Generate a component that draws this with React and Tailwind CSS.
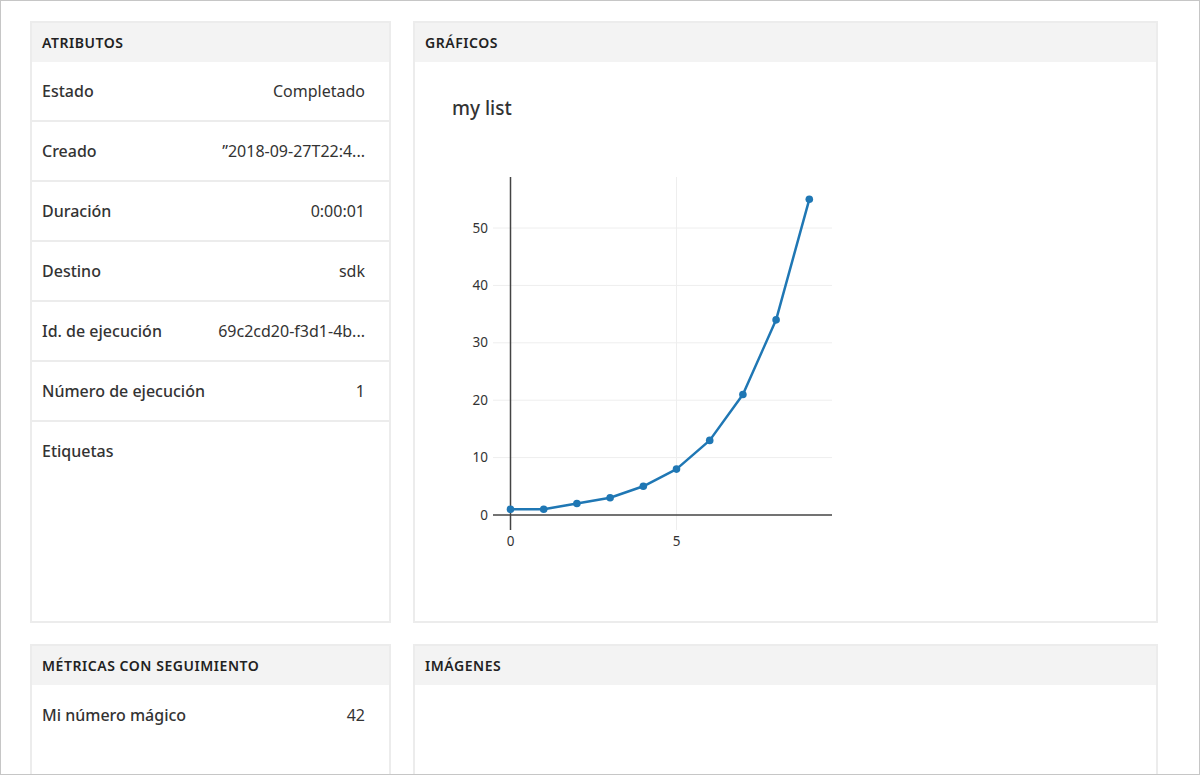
import React from "react";

const FONT = { fontFamily: '"Noto Sans", "Open Sans", "Liberation Sans", sans-serif' };

const attrs = [
  ["Estado", "Completado"],
  ["Creado", "\u201D2018-09-27T22:4..."],
  ["Duración", "0:00:01"],
  ["Destino", "sdk"],
  ["Id. de ejecución", "69c2cd20-f3d1-4b..."],
  ["Número de ejecución", "1"],
];

const data = [1, 1, 2, 3, 5, 8, 13, 21, 34, 55];

function Card({ title, className, children }) {
  return (
    <div className={"bg-white border-2 border-[#ececec] flex flex-col " + className}>
      <div className="h-[39px] bg-[#f3f3f3] flex items-center px-[10px] text-[14px] font-semibold tracking-[0.55px] text-[#222]">
        {title}
      </div>
      {children}
    </div>
  );
}

function Chart() {
  const x0 = 95.5;
  const y0 = 383;
  const sx = 33.2;
  const sy = 5.74;
  const pts = data.map((v, i) => [x0 + i * sx, y0 - v * sy]);
  const grid = [10, 20, 30, 40, 50];
  return (
    <svg width="743" height="430" className="block">
      {grid.map((g) => (
        <line key={g} x1="78" x2="417" y1={y0 - g * sy} y2={y0 - g * sy} stroke="#eeeeee" strokeWidth="1" />
      ))}
      <line x1={x0 + 5 * sx} x2={x0 + 5 * sx} y1="45" y2="398" stroke="#eeeeee" strokeWidth="1" />
      <line x1={x0} x2={x0} y1="45" y2="398" stroke="#444" strokeWidth="1.5" />
      <line x1="78" x2="417" y1={y0} y2={y0} stroke="#444" strokeWidth="1.5" />
      {[0, ...grid].map((g) => (
        <text key={g} x="73" y={y0 - g * sy + 4.5} textAnchor="end" fontSize="13.5" fill="#333" style={FONT}>
          {g}
        </text>
      ))}
      <text x={x0} y="414" textAnchor="middle" fontSize="13.5" fill="#333" style={FONT}>0</text>
      <text x={x0 + 5 * sx} y="414" textAnchor="middle" fontSize="13.5" fill="#333" style={FONT}>5</text>
      <polyline points={pts.map((p) => p.join(",")).join(" ")} fill="none" stroke="#1f77b4" strokeWidth="2.5" strokeLinejoin="round" />
      {pts.map((p, i) => (
        <circle key={i} cx={p[0]} cy={p[1]} r="3.8" fill="#1f77b4" />
      ))}
    </svg>
  );
}

export default function App() {
  return (
    <div className="w-[1200px] h-[775px] overflow-hidden border border-[#c6c6c6] bg-white text-[#333]" style={FONT}>
      <div className="grid grid-cols-[361px_745px] grid-rows-[602px_auto] gap-x-[22px] gap-y-[21px] pt-[20px] pl-[29px]">
        <Card title="ATRIBUTOS">
          {attrs.map(([k, v]) => (
            <div key={k} className="h-[60px] flex items-center justify-between pl-[10px] pr-[24px] border-b-2 border-[#ececec]">
              <span className="text-[16px] font-medium text-[#333]">{k}</span>
              <span className="text-[16px] text-[#333]">{v}</span>
            </div>
          ))}
          <div className="pl-[10px] pt-[17px] text-[16px] font-medium">Etiquetas</div>
        </Card>
        <Card title="GRÁFICOS">
          <div className="pt-[32px] pl-[37px] h-[70px] text-[19px] font-medium text-[#333]">my list</div>
          <Chart />
        </Card>
        <Card title="MÉTRICAS CON SEGUIMIENTO" className="h-[200px]">
          <div className="h-[60px] flex items-center justify-between pl-[10px] pr-[24px]">
            <span className="text-[16px] font-medium text-[#333]">Mi número mágico</span>
            <span className="text-[16px] text-[#333]">42</span>
          </div>
        </Card>
        <Card title="IMÁGENES" className="h-[200px]" />
      </div>
    </div>
  );
}
